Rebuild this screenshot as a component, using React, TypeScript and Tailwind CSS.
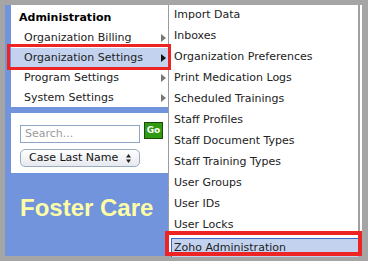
import { ChevronUp } from 'lucide-react'

const mainItems = ['Organization Billing', 'Organization Settings', 'Program Settings', 'System Settings']

const subItems = [
    'Import Data',
    'Inboxes',
    'Organization Preferences',
    'Print Medication Logs',
    'Scheduled Trainings',
    'Staff Profiles',
    'Staff Document Types',
    'Staff Training Types',
    'User Groups',
    'User IDs',
    'User Locks',
    'Zoho Administration',
]

function Arrow({ dark }: { dark?: boolean }) {
    return (
        <svg width="5" height="8" viewBox="0 0 5 8">
            <polygon points="0,0 5,4 0,8" fill={dark ? '#111' : '#777'} />
        </svg>
    )
}

export default function App() {
    // ChevronUp kept out of use; arrows are drawn by hand
    void ChevronUp
    return (
        <div className="relative w-[368px] h-[261px] overflow-hidden bg-[#a5a5a5] pt-[5px] pl-[5px] font-['DejaVu_Sans',Verdana,sans-serif] text-[11px] text-[#222]">
            <div className="flex h-[251px]">
                {/* left column */}
                <div className="w-[163px] bg-[#7194dc] pl-[6px] flex flex-col">
                    <div className="w-[157px] h-[102px] bg-white pt-[3px]">
                        <div className="h-[20px] flex items-center pl-[8px] font-bold text-black">Administration</div>
                        {mainItems.map((item) => {
                            const active = item === 'Organization Settings'
                            return (
                                <div
                                    key={item}
                                    className={`h-[20px] flex items-center justify-between pl-[13px] pr-[2px] ${active ? 'bg-[#c3d3ef]' : ''}`}
                                >
                                    <span>{item}</span>
                                    <Arrow dark={active} />
                                </div>
                            )
                        })}
                    </div>

                    <div className="mt-[6px] h-[60px] bg-white pl-[9px] pt-[9px]">
                        <div className="flex items-start">
                            <div className="mt-[3px] w-[120px] h-[18px] border border-[#8fa7c4] flex items-center pl-[4px] text-[#9a9a9a]">
                                Search...
                            </div>
                            <div className="ml-[4px] w-[19px] h-[17px] bg-[#2f9a12] border border-[#1d4a0a] flex items-center justify-center text-white text-[9px] font-bold leading-none">
                                Go
                            </div>
                        </div>
                        <div className="mt-[6px] w-[120px] h-[18px] border border-[#9aabc4] rounded-[5px] bg-gradient-to-b from-white to-[#e6e9ee] flex items-center justify-between pl-[8px] pr-[8px] text-[#111]">
                            <span>Case Last Name</span>
                            <svg width="5" height="9" viewBox="0 0 5 9">
                                <polygon points="0,3.5 2.5,0 5,3.5" fill="#222" />
                                <polygon points="0,5.5 2.5,9 5,5.5" fill="#222" />
                            </svg>
                        </div>
                    </div>

                    <div className="mt-[21px] pl-[9px] font-['Liberation_Sans',Arial,sans-serif] font-bold text-[24px] leading-[28px] text-[#fdfea6]">
                        Foster Care
                    </div>
                </div>

                {/* flyout submenu */}
                <div className="w-[194px] bg-white border-l border-[#9c9c9c] pr-[2px]">
                    <div className="h-full border-r-2 border-[#a0a0a0] pt-0">
                        {subItems.map((item) => {
                            const active = item === 'Zoho Administration'
                            return (
                                <div key={item} className="h-[21px] flex items-center">
                                    {active ? (
                                        <div className="ml-[2px] w-[187px] h-[19px] mt-[2px] bg-[#c3d3ef] border-t border-l border-[#3f66c6] flex items-center pl-[2px]">
                                            {item}
                                        </div>
                                    ) : (
                                        <span className="pl-[5px]">{item}</span>
                                    )}
                                </div>
                            )
                        })}
                    </div>
                </div>
            </div>

            {/* red annotation boxes */}
            <div className="absolute left-[7px] top-[44px] w-[164px] h-[26px] border-[3px] border-[#ee2323]" />
            <div className="absolute left-[165px] top-[231px] w-[197px] h-[25px] border-[4px] border-[#ee2323]" />
        </div>
    )
}
